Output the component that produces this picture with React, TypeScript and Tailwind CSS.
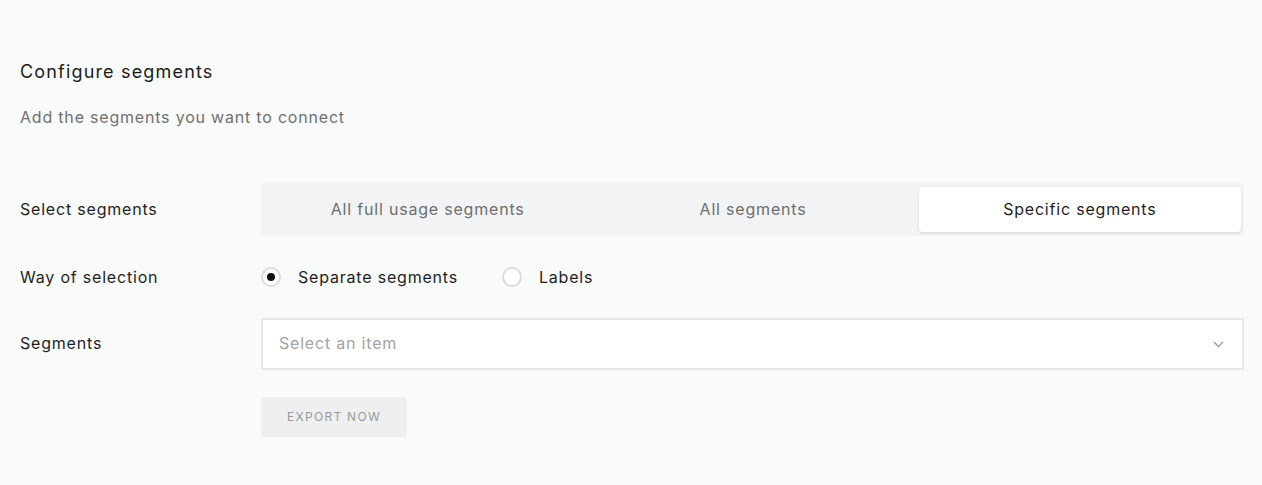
import { useState } from "react";

const tabs = ["All full usage segments", "All segments", "Specific segments"];

const Radio: React.FC<{ checked: boolean; label: string; onClick: () => void }> = ({
  checked,
  label,
  onClick,
}) => {
  return (
    <button onClick={onClick} className="flex items-center gap-[17px] text-[16px] text-[#1f1f1f]">
      <span className="w-[20px] h-[20px] rounded-full border-2 border-[#dcdcdc] bg-white flex items-center justify-center">
        {checked && <span className="w-[8px] h-[8px] rounded-full bg-[#111]" />}
      </span>
      {label}
    </button>
  );
};

const App: React.FC = () => {
  const [tab, setTab] = useState(2);
  const [way, setWay] = useState("separate");

  return (
    <div
      className="min-h-screen bg-[#f9fafa] pl-5 pr-[18px] pt-[60px] tracking-[0.05em]"
      style={{ fontFamily: "Inter, 'Noto Sans', sans-serif" }}
    >
      {/* header */}
      <h2 className="text-[18px] leading-6 text-[#1a1a1a] tracking-[0.065em]">Configure segments</h2>
      <p className="mt-[21px] text-[16px] leading-6 text-[#707070]">Add the segments you want to connect</p>

      {/* select segments */}
      <div className="mt-[54px] flex items-center">
        <div className="w-[241px] text-[16px] text-[#1f1f1f] -mt-[2px]">Select segments</div>
        <div className="flex-1 grid grid-cols-3 bg-[#f2f3f5] rounded pl-1 pr-[3px] py-1 h-[53px]">
          {tabs.map((t, i) => (
            <button
              key={t}
              onClick={() => setTab(i)}
              className={
                i === tab
                  ? "bg-white rounded shadow-[0_1px_3px_rgba(0,0,0,0.12)] text-[16px] text-[#1f1f1f] ml-[3px] pb-[2px]"
                  : "text-[16px] text-[#6e6e6e] pb-[2px]"
              }
            >
              {t}
            </button>
          ))}
        </div>
      </div>

      {/* way of selection */}
      <div className="mt-[29px] flex items-center h-6">
        <div className="w-[241px] text-[16px] text-[#1f1f1f]">Way of selection</div>
        <div className="flex items-center gap-[44px]">
          <Radio checked={way === "separate"} label="Separate segments" onClick={() => setWay("separate")} />
          <Radio checked={way === "labels"} label="Labels" onClick={() => setWay("labels")} />
        </div>
      </div>

      {/* segments */}
      <div className="mt-[29px] flex items-center">
        <div className="w-[241px] text-[16px] text-[#1f1f1f] -mt-[2px]">Segments</div>
        <div className="flex-1 h-[52px] border-2 border-[#e6e7e8] bg-white flex items-center justify-between pl-4 pr-[16px]">
          <span className="text-[16px] text-[#a3a3a3] -mt-[3px]">Select an item</span>
          <svg width="11" height="7" viewBox="0 0 11 7" fill="none" className="mr-[2px]">
            <path d="M1 1l4.5 4.5L10 1" stroke="#9a9a9a" strokeWidth="1.3" />
          </svg>
        </div>
      </div>

      {/* export */}
      <div className="mt-[27px] pl-[241px]">
        <button className="h-[40px] w-[146px] rounded bg-[#eeeff1] text-[12px] tracking-[1.3px] text-[#9a9a9a]">
          EXPORT NOW
        </button>
      </div>
    </div>
  );
};

export default App;
